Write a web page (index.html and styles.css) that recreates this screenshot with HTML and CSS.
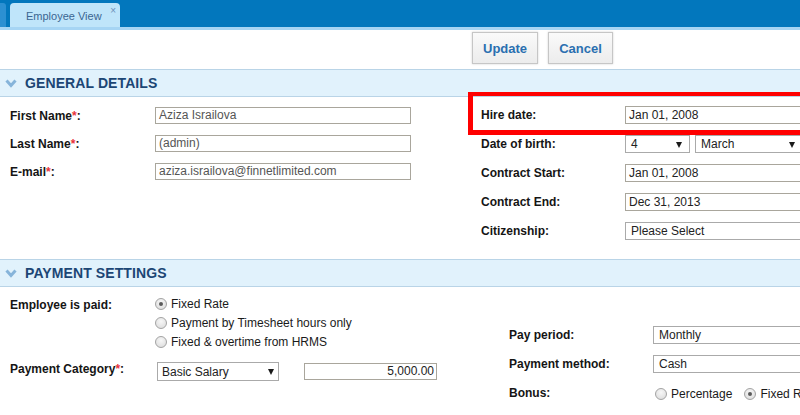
FILE: index.html
```html
<!DOCTYPE html>
<html>
<head>
<meta charset="utf-8">
<title>Employee View</title>
<link rel="stylesheet" href="styles.css">
</head>
<body>
<div class="page">
  <div class="topbar">
    <div class="stub"></div>
    <div class="tab"><span class="tab-title">Employee View</span><span class="tab-close">×</span></div>
  </div>
  <div class="toolbar">
    <button class="btn">Update</button>
    <button class="btn">Cancel</button>
  </div>

  <div class="section-head">
    <svg class="chev" width="12" height="9" viewBox="0 0 12 9"><polyline points="1.5,1.5 6,6.5 10.5,1.5" fill="none" stroke="#86b4da" stroke-width="3"/></svg>
    <span class="section-title">GENERAL DETAILS</span>
  </div>
  <div class="section-body general">
    <div class="col col-left">
      <div class="row"><label class="lbl">First Name<span class="req">*</span>:</label><div class="field w-left muted">Aziza Israilova</div></div>
      <div class="row"><label class="lbl">Last Name<span class="req">*</span>:</label><div class="field w-left muted">(admin)</div></div>
      <div class="row"><label class="lbl">E-mail<span class="req">*</span>:</label><div class="field w-left muted">aziza.israilova@finnetlimited.com</div></div>
    </div>
    <div class="col col-right">
      <div class="row"><label class="lbl lbl-r">Hire date:</label><div class="field w-right">Jan 01, 2008</div></div>
      <div class="row"><label class="lbl lbl-r">Date of birth:</label><div class="select w-day"><span>4</span><i class="arrow"></i></div><div class="select w-month"><span>March</span><i class="arrow"></i></div></div>
      <div class="row"><label class="lbl lbl-r">Contract Start:</label><div class="field w-right">Jan 01, 2008</div></div>
      <div class="row"><label class="lbl lbl-r">Contract End:</label><div class="field w-right">Dec 31, 2013</div></div>
      <div class="row"><label class="lbl lbl-r">Citizenship:</label><div class="select w-right"><span>Please Select</span></div></div>
    </div>
    <div class="highlight"></div>
  </div>

  <div class="section-head">
    <svg class="chev" width="12" height="9" viewBox="0 0 12 9"><polyline points="1.5,1.5 6,6.5 10.5,1.5" fill="none" stroke="#86b4da" stroke-width="3"/></svg>
    <span class="section-title">PAYMENT SETTINGS</span>
  </div>
  <div class="section-body payment">
    <div class="col pay-left">
      <div class="row-top">
        <label class="lbl lbl-paid">Employee is paid:</label>
        <div class="radios">
          <div class="radio-row"><span class="radio on"></span>Fixed Rate</div>
          <div class="radio-row"><span class="radio"></span>Payment by Timesheet hours only</div>
          <div class="radio-row"><span class="radio"></span>Fixed &amp; overtime from HRMS</div>
        </div>
      </div>
      <div class="row row-cat">
        <label class="lbl lbl-cat">Payment Category<span class="req">*</span>:</label>
        <div class="select w-cat"><span>Basic Salary</span><i class="arrow"></i></div>
        <div class="field w-amount">5,000.00</div>
      </div>
    </div>
    <div class="col pay-right">
      <div class="row"><label class="lbl lbl-r">Pay period:</label><div class="select w-pay"><span>Monthly</span></div></div>
      <div class="row"><label class="lbl lbl-r">Payment method:</label><div class="select w-pay"><span>Cash</span></div></div>
      <div class="row"><label class="lbl lbl-r">Bonus:</label>
        <div class="bonus"><span class="radio"></span>Percentage<span class="radio on r2"></span>Fixed Rate</div>
      </div>
    </div>
  </div>
</div>
</body>
</html>
```

FILE: styles.css
```css
html, body {
  margin: 0;
  padding: 0;
  background: #ffffff;
}
body {
  font-family: "Liberation Sans", Arial, sans-serif;
  font-size: 12px;
  color: #1a1a1a;
  overflow: hidden;
}
.page {
  width: 800px;
  height: 415px;
  overflow: hidden;
}

/* top bar */
.topbar {
  height: 27px;
  background: #0277bd;
  border-bottom: 3px solid #a6d5f4;
  display: flex;
  align-items: flex-end;
  box-sizing: content-box;
}
.stub {
  width: 6px;
  height: 24px;
  background: #2c90d2;
  border-radius: 0 3px 0 0;
}
.tab {
  margin-left: 4px;
  width: 110px;
  height: 24px;
  background: #bfe5fa;
  border-radius: 4px 4px 0 0;
  display: flex;
  align-items: center;
  position: relative;
  box-sizing: border-box;
  padding-left: 16px;
}
.tab-title {
  font-size: 11px;
  color: #3a6592;
  padding-top: 1px;
}
.tab-close {
  position: absolute;
  right: 4px;
  top: 3px;
  font-size: 10px;
  line-height: 10px;
  color: #6c90b8;
}

/* toolbar */
.toolbar {
  height: 39px;
  box-sizing: border-box;
  padding: 2px 0 0 472px;
  display: flex;
  gap: 10px;
  align-items: flex-start;
}
.btn {
  height: 32px;
  padding: 0 10px;
  border: 1px solid #c6c6c6;
  background: linear-gradient(#fafafa, #ececec);
  box-shadow: 0 0 2px rgba(0,0,0,0.18);
  font-family: "Liberation Sans", Arial, sans-serif;
  font-weight: bold;
  font-size: 13px;
  color: #2a6fb0;
  margin: 0;
}
.btn:first-child { width: 66px; }
.btn:last-child { width: 65px; }

/* section headers */
.section-head {
  height: 26px;
  background: #e1f2fc;
  border-top: 1px solid #b9d4e7;
  border-bottom: 1px solid #b9d4e7;
  display: flex;
  align-items: center;
}
.chev {
  margin-left: 5px;
  margin-right: 8px;
  margin-top: 1px;
}
.section-title {
  font-size: 14px;
  font-weight: bold;
  color: #1c4675;
  letter-spacing: 0.1px;
}

/* bodies */
.section-body {
  display: flex;
  position: relative;
}
.col {
  display: flex;
  flex-direction: column;
  gap: 11px;
  box-sizing: border-box;
}
.general .col-left {
  width: 471px;
  flex: none;
  padding: 10px 0 0 10px;
}
.general .col-right {
  flex: none;
  width: 329px;
  padding: 9px 0 19px 10px;
}
.row {
  display: flex;
  align-items: center;
  height: 18px;
}
.lbl {
  width: 145px;
  flex: none;
  font-weight: bold;
  font-size: 12px;
  color: #151515;
}
.lbl-r { width: 144px; }
.req { color: #e8323a; }

.field, .select {
  height: 18px;
  box-sizing: border-box;
  border: 1px solid #a9a69c;
  background: #fff;
  font-size: 12px;
  line-height: 16px;
  padding: 0 3px;
  color: #222;
  white-space: nowrap;
  overflow: hidden;
  flex: none;
}
.general .col-left .row { height: 17px; }
.general .col-left .field { height: 17px; line-height: 15px; }
.muted { color: #555; }
.w-left { width: 256px; }
.w-right { width: 200px; }
.select {
  border-color: #aaaaaa;
  padding: 0 6px 0 5px;
  display: flex;
  align-items: center;
  justify-content: space-between;
}
.w-day { width: 65px; padding-right: 7px; }
.w-month { width: 106px; margin-left: 5px; padding-right: 5px; }
.arrow {
  width: 0;
  height: 0;
  border-left: 3.5px solid transparent;
  border-right: 3.5px solid transparent;
  border-top: 6px solid #1a1a1a;
  margin-top: 1px;
}

.highlight {
  position: absolute;
  left: 468px;
  top: -5px;
  width: 360px;
  height: 43px;
  border: 5px solid #ff0000;
  border-top-width: 4px;
  box-sizing: border-box;
  pointer-events: none;
}

/* payment */
.pay-left {
  width: 499px;
  flex: none;
  padding: 7px 0 0 10px;
  gap: 11px;
}
.row-top {
  display: flex;
  align-items: flex-start;
}
.lbl-paid {
  line-height: 19px;
  margin-top: 2px;
}
.radios {
  display: flex;
  flex-direction: column;
}
.radio-row {
  height: 19px;
  display: flex;
  align-items: center;
  color: #1a1a1a;
}
.radio {
  width: 12px;
  height: 12px;
  box-sizing: border-box;
  border-radius: 50%;
  border: 1px solid #a3a3a3;
  background: radial-gradient(circle at 50% 35%, #f7f7f7, #d9d9d9);
  margin-right: 4px;
  flex: none;
  position: relative;
}
.radio.on::after {
  content: "";
  position: absolute;
  left: 3px;
  top: 3px;
  width: 4px;
  height: 4px;
  border-radius: 50%;
  background: #5a5a5a;
}
.row-cat { height: 19px; }
.lbl-cat { padding-bottom: 5px; }
.w-cat { width: 122px; margin-left: 2px; padding: 0 4px; height: 19px; }
.w-amount {
  width: 133px;
  margin-left: 25px;
  text-align: right;
  padding-right: 2px;
  height: 17px;
  line-height: 15px;
}

.pay-right {
  flex: none;
  width: 301px;
  padding: 39px 0 0 10px;
  gap: 11px;
}
.w-pay { width: 160px; margin-left: 0; }
.bonus {
  display: flex;
  align-items: center;
  margin-left: 2px;
  white-space: nowrap;
  padding-top: 2px;
}
.bonus .radio { margin-right: 4px; }
.bonus .r2 { margin-left: 12px; }
```
